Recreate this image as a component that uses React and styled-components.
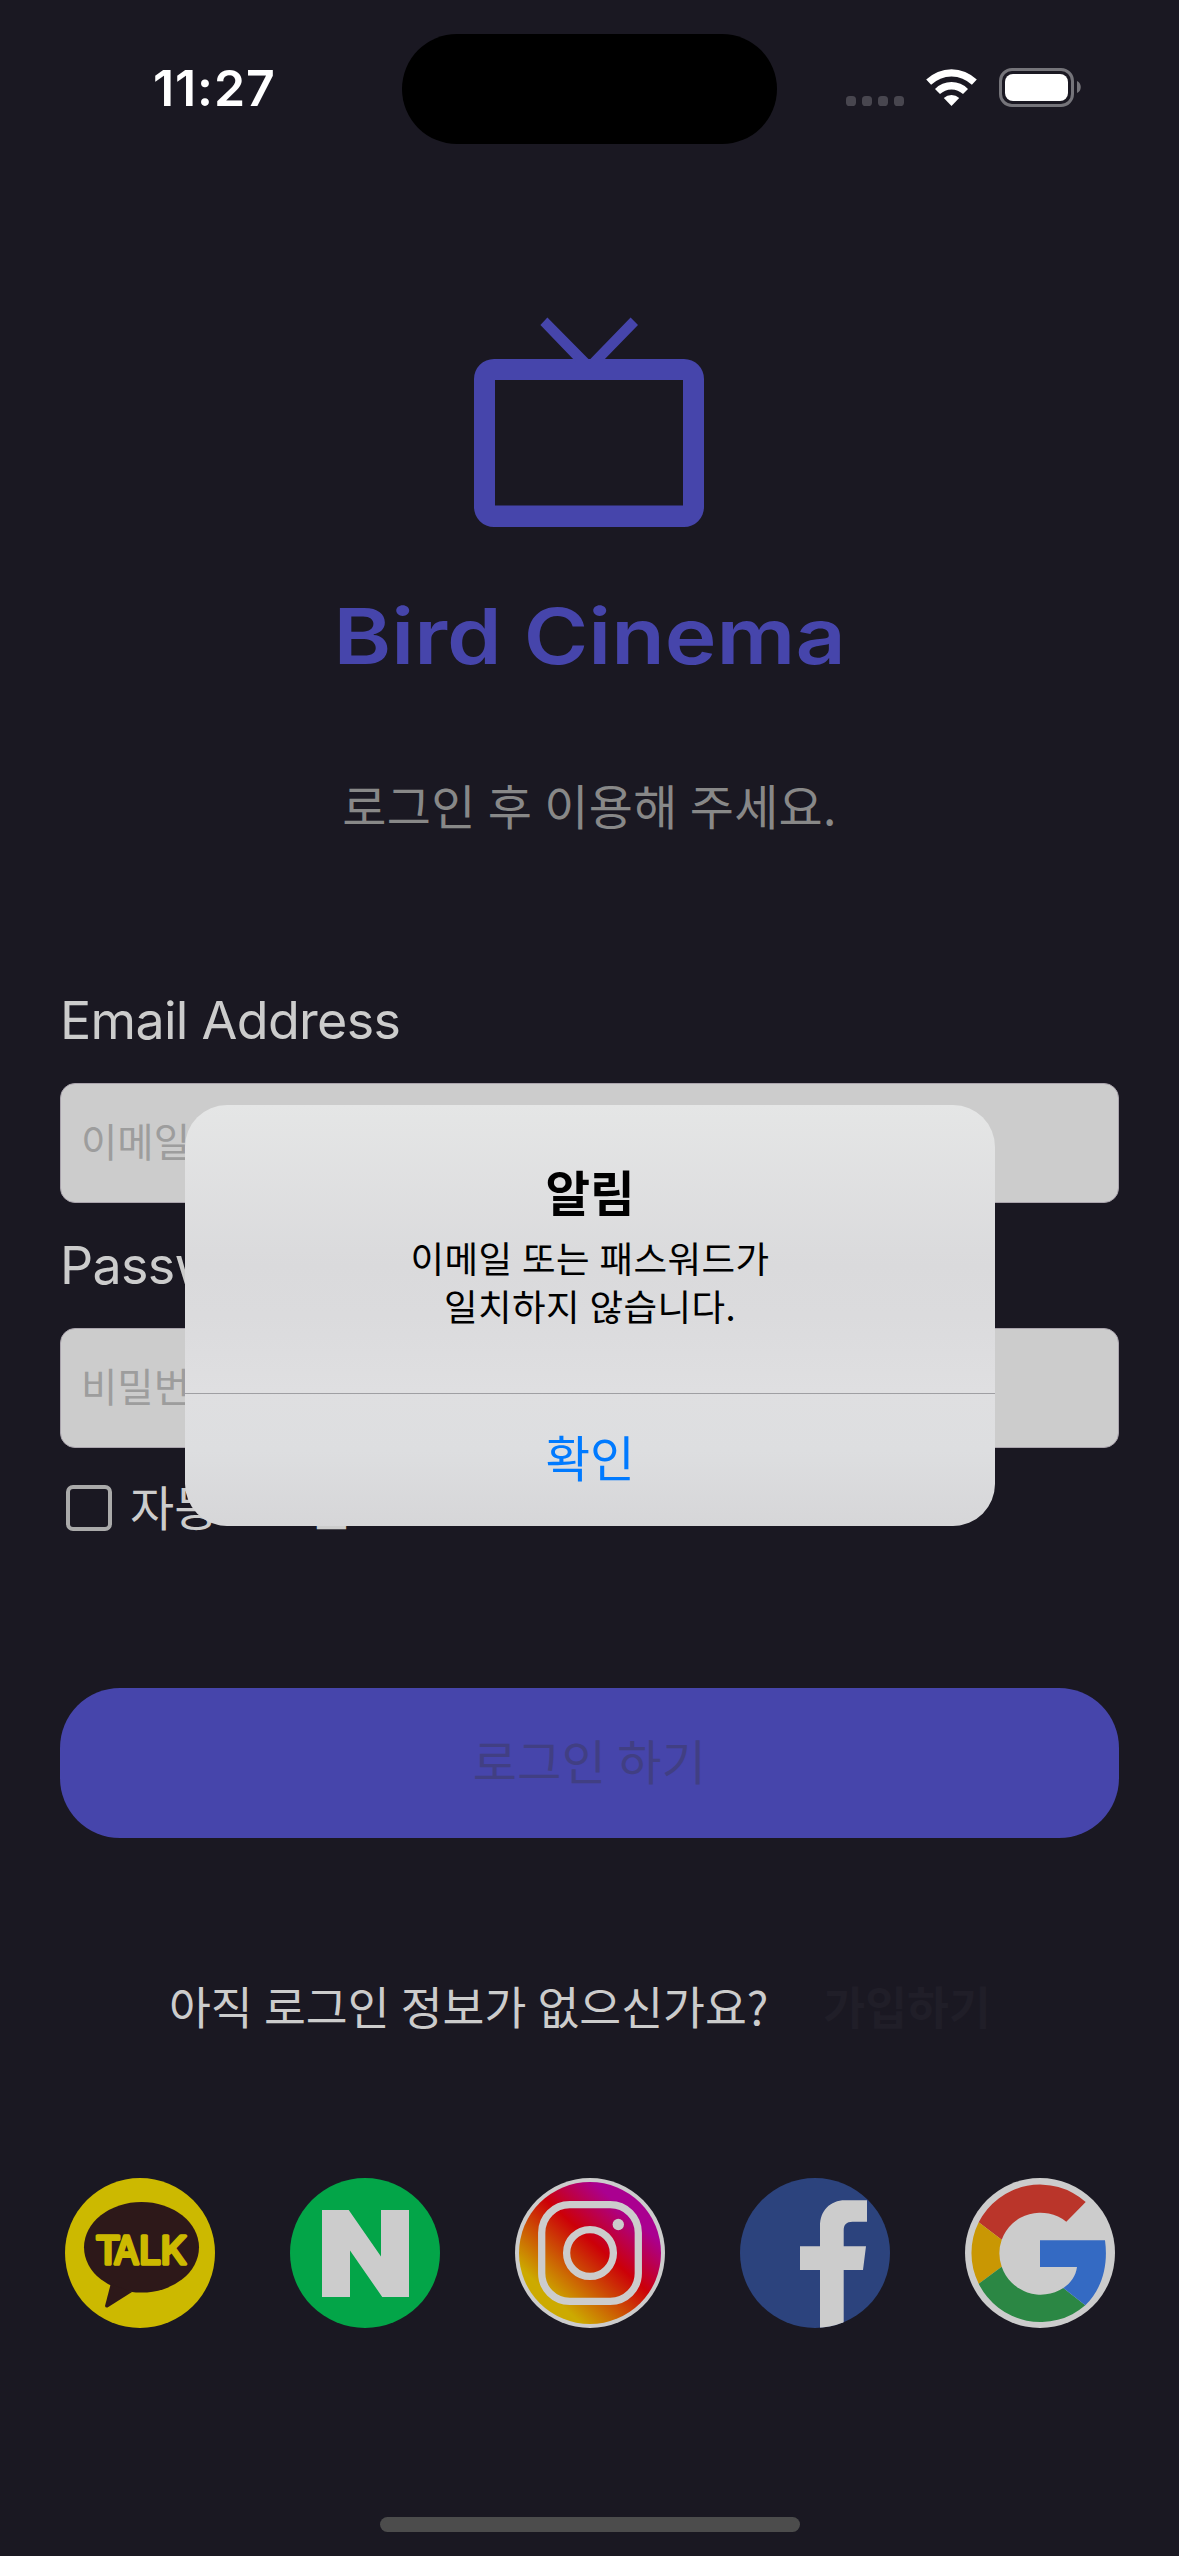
/**
*
* Bird Cinema - login screen
*
*/

import React from 'react';
import styled, { createGlobalStyle } from 'styled-components';
import { SiNaver } from 'react-icons/si';

const GlobalStyle = createGlobalStyle`
  * {
    box-sizing: border-box;
  }

  body {
    margin: 0;
    background: #1a1822;
  }
`;

const Screen = styled.main`
  position: relative;
  display: flex;
  flex-direction: column;
  width: 1179px;
  height: 2556px;
  overflow: hidden;
  padding-bottom: 24px;
  color: #ccc;
  background: #1a1822;
  font-family: 'Noto Sans CJK KR', sans-serif;
`;

const StatusBar = styled.header`
  display: grid;
  grid-template-columns: 402px 375px 402px;
  height: 144px;
  padding-top: 34px;
`;

const Time = styled.div`
  padding: 24px 0 0 153px;
  color: #fff;
  font-family: Inter, sans-serif;
  font-size: 50px;
  font-weight: 600;
  line-height: 60px;
  letter-spacing: 0.9px;
`;

const Island = styled.div`
  height: 110px;
  border-radius: 55px;
  background: #000;
`;

const Indicators = styled.div`
  padding: 33px 0 0 63px;

  svg {
    display: block;
  }
`;

const Brand = styled.section`
  display: flex;
  flex-direction: column;
  align-items: center;
  margin-top: 173px;
`;

const BrandName = styled.h1`
  margin: 64px 0 0;
  color: #4645ab;
  font-family: Inter, sans-serif;
  font-size: 77.5px;
  font-weight: 600;
  line-height: 90px;
  white-space: nowrap;
  transform: scaleX(1.13);
`;

const Guide = styled.p`
  margin: 93px 0 0;
  color: #888;
  font-size: 48px;
  line-height: 60px;
  letter-spacing: 0.3px;
  word-spacing: 1px;
`;

const Form = styled.form`
  display: flex;
  flex-direction: column;
  margin-top: 157px;
  padding: 0 60px;
`;

const Label = styled.label`
  font-family: Inter, sans-serif;
  font-size: 52px;
  line-height: 60px;
  letter-spacing: -0.7px;
`;

const Input = styled.input`
  height: 120px;
  margin: 32px 0 33px;
  padding: 0 20px 7px;
  border: 1px solid #aaa4ad;
  border-radius: 15px;
  background: #ccc;
  font-family: 'Noto Sans CJK KR', sans-serif;
  font-size: 39.5px;

  &::placeholder {
    color: #9d9d9d;
    opacity: 1;
  }
`;

const AutoLogin = styled.label`
  display: flex;
  align-items: center;
  height: 46px;
  margin: 4px 0 0 6px;
  font-size: 48px;
  line-height: 46px;
`;

const AutoLoginText = styled.span`
  padding-bottom: 7px;
`;

const CheckBox = styled.span`
  width: 46px;
  height: 46px;
  margin-right: 18px;
  border: 4px solid #aaa;
  border-radius: 7px;
`;

const LoginButton = styled.button`
  height: 150px;
  margin-top: 157px;
  padding: 0 0 8px;
  border: 0;
  border-radius: 60px;
  color: #413f83;
  background: #4645ab;
  font-family: inherit;
  font-size: 48px;
  letter-spacing: 0.3px;
`;

const SignUp = styled.div`
  display: flex;
  margin: 137px 0 0 169px;
  font-size: 45.5px;
  line-height: 60px;
  word-spacing: 1px;
`;

const SignUpLink = styled.a`
  margin-left: 55px;
  color: #201e28;
  font-weight: 700;
`;

const SocialList = styled.nav`
  display: flex;
  justify-content: space-between;
  margin-top: 143px;
  padding: 0 64px 0 65px;
`;

const SocialButton = styled.a`
  display: flex;
  align-items: center;
  justify-content: center;
  width: 150px;
  height: 150px;
  overflow: hidden;
  border-radius: 50%;
  color: #ccc;
  background: ${(props) => props.$color};
`;

const HomeIndicator = styled.div`
  width: 420px;
  height: 15px;
  margin: auto auto 0;
  border-radius: 8px;
  background: #4c4c4c;
`;

const Overlay = styled.div`
  position: absolute;
  inset: 0;
  display: flex;
  align-items: center;
  justify-content: center;
  padding: 75px 0 0 1px;
`;

const AlertBox = styled.div`
  display: flex;
  flex-direction: column;
  width: 810px;
  height: 421px;
  border-radius: 42px;
  overflow: hidden;
  color: #000;
  text-align: center;
  background: linear-gradient(#e5e6e6, #dadadc 38%, #dbdbdd 50%, #dfdfe1 68%, #dddee0 82%, #d6d6d8);
`;

const AlertBody = styled.div`
  flex: 1;
  padding-top: 53px;
`;

const AlertTitle = styled.h2`
  margin: 0;
  font-size: 48.5px;
  font-weight: 700;
  line-height: 66px;
`;

const AlertMessage = styled.p`
  margin: 10px 0 0;
  font-size: 36.5px;
  line-height: 48px;
  letter-spacing: 0.4px;
  word-spacing: 1px;
`;

const AlertButton = styled.button`
  height: 133px;
  padding: 0 0 8px;
  border: 0;
  border-top: 1px solid #9f9fa3;
  color: #007aff;
  background: transparent;
  font-family: inherit;
  font-size: 48.5px;
`;

function StatusIcons() {
  return (
    <svg width="250" height="42" viewBox="840 67 250 42">
      {[846, 862, 878, 894].map((x) => (
        <rect key={x} x={x} y="96" width="10" height="10" rx="3.6" fill="#48464f" />
      ))}
      <g fill="#fff">
        <path d="M926.2 79.6a36 36 0 0 1 50.6 0l-4.9 5.2a29.3 29.3 0 0 0-40.8 0z" />
        <path d="M935 88.9a23.4 23.4 0 0 1 33 0l-5 5.2a16.4 16.4 0 0 0-23 0z" />
        <path d="M943.8 98a11.2 11.2 0 0 1 15.4 0l-7.7 8z" />
      </g>
      <rect x="1000.5" y="69.5" width="72" height="36" rx="11.5" fill="none" stroke="#75747a" strokeWidth="3" />
      <rect x="1005" y="74" width="63" height="27" rx="8" fill="#fff" />
      <path d="M1077 81c5 2.2 5 10.3 0 12z" fill="#75747a" />
    </svg>
  );
}

function TvLogo() {
  return (
    <svg width="231" height="210" viewBox="474 317 231 210" fill="#4645ab">
      <path
        fillRule="evenodd"
        d="M494 359h190a20 20 0 0 1 20 20v128a20 20 0 0 1-20 20H494a20 20 0 0 1-20-20V379a20 20 0 0 1 20-20zm1 21v125.5h188V380z"
      />
      <path d="M540.4 325l7-7.600 42 42.600 41.200-42.600 7.400 7.600-36 37h-26z" />
    </svg>
  );
}

function KakaoIcon() {
  return (
    <svg width="150" height="150" viewBox="0 0 150 150">
      <ellipse cx="76.5" cy="69.3" rx="57.5" ry="45.3" fill="#2d1819" />
      <path d="M45.7 106L40 128q.5 2 2.5 1.500L67 114z" fill="#2d1819" />
      <g
        fill="#ccb900"
        stroke="#ccb900"
        strokeWidth="3.6"
        strokeLinejoin="round"
        fontFamily="Inter, sans-serif"
        fontSize="38.5"
        fontWeight="400"
      >
        <text x="30.5" y="85.5" textLength="25" lengthAdjust="spacingAndGlyphs">T</text>
        <text x="49" y="85.5" textLength="25" lengthAdjust="spacingAndGlyphs">A</text>
        <text x="74" y="85.5" textLength="22" lengthAdjust="spacingAndGlyphs">L</text>
        <text x="95.5" y="85.5" textLength="26" lengthAdjust="spacingAndGlyphs">K</text>
      </g>
    </svg>
  );
}

function InstagramIcon() {
  return (
    <svg width="150" height="150" viewBox="0 0 150 150">
      <defs>
        <linearGradient id="insta" gradientUnits="userSpaceOnUse" x1="36" y1="118" x2="112" y2="34">
          <stop offset="0" stopColor="#ccaa00" />
          <stop offset="0.6" stopColor="#cc0008" />
          <stop offset="1" stopColor="#aa0090" />
        </linearGradient>
      </defs>
      <circle cx="75" cy="75" r="71" fill="url(#insta)" />
      <g fill="none" stroke="#ccc" strokeWidth="7.3">
        <rect x="26.7" y="26.7" width="96.6" height="96.6" rx="28" />
        <circle cx="75" cy="75" r="23.4" />
      </g>
      <circle cx="103.3" cy="46.5" r="5.7" fill="#ccc" />
    </svg>
  );
}

function FacebookIcon() {
  return (
    <svg width="150" height="150" viewBox="0 0 150 150">
      <path
        fill="#ccc"
        d="M80 150V92H60V68.300h20V48c0-15 10-25.700 25-25.700h22v21.400h-14.500c-6 0-8.800 3-8.800 8.300v16.300H126L123 92h-19.300v58z"
      />
    </svg>
  );
}

function GoogleIcon() {
  return (
    <svg width="150" height="150" viewBox="0 0 150 150">
      <path fill="#ba352a" d="M13.700 44.300A68.700 68.700 0 0 1 120.700 24l-19.400 19.700A41.300 41.300 0 0 0 36.700 61.700z" />
      <path fill="#c99703" d="M13.700 44.300a68.700 68.700 0 0 0 0 61.400l23-17a41.300 41.300 0 0 1 0-27z" />
      <path fill="#2b8744" d="M13.700 105.700a68.700 68.700 0 0 0 106.600 21.600L98.300 110a41.300 41.300 0 0 1-61.600-21.300z" />
      <path fill="#346ac3" d="M75 62.300h65c3.500 25-3 49-19.700 65L98.300 110c7.500-5 12.500-12 13.700-21H75z" />
    </svg>
  );
}

const socials = [
  { name: 'kakao', color: '#ccb900', icon: <KakaoIcon /> },
  { name: 'naver', color: '#03a548', icon: <SiNaver size={87} /> },
  { name: 'instagram', color: '#ccc', icon: <InstagramIcon /> },
  { name: 'facebook', color: '#2c437d', icon: <FacebookIcon /> },
  { name: 'google', color: '#ccc', icon: <GoogleIcon /> },
];

export default function App() {
  return (
    <Screen>
      <GlobalStyle />
      <StatusBar>
        <Time>11:27</Time>
        <Island />
        <Indicators>
          <StatusIcons />
        </Indicators>
      </StatusBar>

      <Brand>
        <TvLogo />
        <BrandName>Bird Cinema</BrandName>
        <Guide>로그인 후 이용해 주세요.</Guide>
      </Brand>

      <Form>
        <Label htmlFor="email">Email Address</Label>
        <Input id="email" placeholder="이메일" />
        <Label htmlFor="password">Password</Label>
        <Input id="password" type="password" placeholder="비밀번호" />
        <AutoLogin>
          <CheckBox />
          <AutoLoginText>자동로그인</AutoLoginText>
        </AutoLogin>
        <LoginButton type="button">로그인 하기</LoginButton>
      </Form>

      <SignUp>
        아직 로그인 정보가 없으신가요?
        <SignUpLink>가입하기</SignUpLink>
      </SignUp>

      <SocialList>
        {socials.map(({ name, color, icon }) => (
          <SocialButton key={name} $color={color} aria-label={name}>
            {icon}
          </SocialButton>
        ))}
      </SocialList>

      <HomeIndicator />

      <Overlay>
        <AlertBox role="alertdialog">
          <AlertBody>
            <AlertTitle>알림</AlertTitle>
            <AlertMessage>
              이메일 또는 패스워드가
              <br />
              일치하지 않습니다.
            </AlertMessage>
          </AlertBody>
          <AlertButton>확인</AlertButton>
        </AlertBox>
      </Overlay>
    </Screen>
  );
}
